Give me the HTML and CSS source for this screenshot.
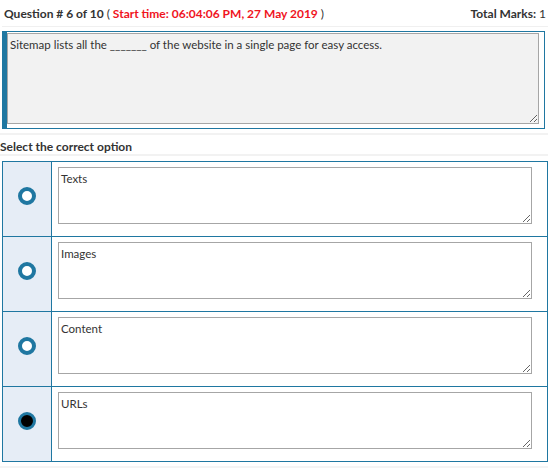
FILE: index.html
```html
<!DOCTYPE html>
<html>
<head>
  <title>Online Test - Question 6</title>
  <meta charset="UTF-8">
  <link rel="stylesheet" href="styles.css">
</head>
<body>
  <div class="quiz">
    <div class="q-head">
      <div class="q-num">Question # 6 of 10 <span class="paren">(</span> <span class="start">Start time: 06:04:06 PM, 27 May 2019</span> <span class="paren">)</span></div>
      <div class="marks">Total Marks: <span class="paren">1</span></div>
    </div>

    <div class="q-box">
      <textarea class="q-text" readonly>Sitemap lists all the _______ of the website in a single page for easy access.</textarea>
    </div>

    <div class="select-label">Select the correct option</div>

    <div class="options">
      <div class="opt">
        <div class="opt-radio"><span class="radio"></span></div>
        <div class="opt-body"><textarea class="opt-text" readonly>Texts</textarea></div>
      </div>
      <div class="opt">
        <div class="opt-radio"><span class="radio"></span></div>
        <div class="opt-body"><textarea class="opt-text" readonly>Images</textarea></div>
      </div>
      <div class="opt">
        <div class="opt-radio"><span class="radio"></span></div>
        <div class="opt-body"><textarea class="opt-text" readonly>Content</textarea></div>
      </div>
      <div class="opt">
        <div class="opt-radio"><span class="radio checked"></span></div>
        <div class="opt-body"><textarea class="opt-text" readonly>URLs</textarea></div>
      </div>
    </div>
    <div class="q-foot"></div>
  </div>
</body>
</html>
```

FILE: styles.css
```css
body {
  margin: 0;
  background: #FFFFFF;
  color: #333333;
  font-family: 'Lato', sans-serif;
  font-size: 12px;
}
.quiz {
  padding: 0 4px 0 2px;
}
.q-head {
  display: flex;
  justify-content: space-between;
  align-items: center;
  height: 26px;
  padding: 0 2px 0 2px;
  border-bottom: 1px solid #F0F0F0;
  font-weight: 700;
}
.paren {
  font-weight: 400;
}
.start {
  color: #F0141E;
}
.q-box {
  margin: 4px 3px 0 0;
  border: 1px solid #1F77A1;
  border-left: 5px solid #1F77A1;
  padding: 1px 5px 4px 0;
}
.q-text,
.opt-text {
  display: block;
  width: 100%;
  box-sizing: border-box;
  margin: 0;
  border: 1px solid #A6A6A6;
  font-family: inherit;
  font-size: 11.5px;
  line-height: 14px;
  color: #333333;
  padding: 4px 2px;
  outline: none;
}
.q-text {
  height: 91px;
  background: #F2F2F2;
}
.select-label {
  margin: 4px 0 0 -2px;
  height: 19px;
  line-height: 24px;
  border-top: 2px solid #F2F2F2;
  border-bottom: 2px solid #F2F2F2;
  font-weight: 700;
}
.options {
  margin-top: 5px;
  border: 1px solid #1F77A1;
}
.opt {
  display: flex;
  box-sizing: border-box;
  height: 75px;
  border-top: 1px solid #1F77A1;
}
.opt:first-child {
  border-top: none;
  height: 74px;
}
.opt-radio {
  width: 49px;
  flex-shrink: 0;
  box-sizing: border-box;
  padding-bottom: 7px;
  background: #E6EDF6;
  border-right: 1px solid #1F77A1;
  display: flex;
  align-items: center;
  justify-content: center;
}
.radio {
  width: 10px;
  height: 10px;
  border: 4px solid #1F77A1;
  border-radius: 50%;
  background: #FFFFFF;
}
.radio.checked {
  width: 12px;
  height: 12px;
  border-width: 3px;
  background: #000000;
}
.opt-body {
  flex: 1;
  padding: 5px 15px 0 6px;
}
.opt-text {
  height: 57px;
  background: #FFFFFF;
}
.q-foot {
  margin: 4px 0 0 -2px;
  border-top: 2px solid #F4F4F4;
}
```
